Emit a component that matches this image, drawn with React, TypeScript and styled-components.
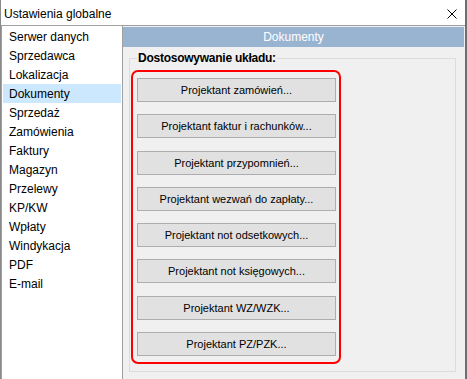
import React from "react";
import styled, { createGlobalStyle } from "styled-components";

const GlobalStyle = createGlobalStyle`
  html, body {
    margin: 0;
    padding: 0;
    background: #ffffff;
  }
  body {
    font-family: "Liberation Sans", Arial, sans-serif;
    color: #000000;
  }
  * { box-sizing: border-box; }
`;

const Window = styled.div`
  width: 467px;
  height: 379px;
  display: flex;
  flex-direction: column;
  border-left: 1px solid #8a8a8a;
  border-right: 2px solid #6f6f6f;
  background: #ffffff;
  overflow: hidden;
`;

const TitleBar = styled.div`
  height: 26px;
  flex: none;
  display: flex;
  align-items: flex-start;
  justify-content: space-between;
  padding: 7px 8px 0 3px;
  background: #ffffff;
  border-bottom: 1px solid #a0a0a0;
`;

const TitleText = styled.span`
  font-size: 12px;
  line-height: 14px;
`;

const CloseIcon = styled.svg`
  width: 10px;
  height: 10px;
  margin-top: 2px;
  display: block;
`;

const Body = styled.div`
  flex: 1;
  display: flex;
  min-height: 0;
`;

const NavList = styled.ul`
  list-style: none;
  margin: 0;
  width: 122px;
  flex: none;
  padding: 1px;
  background: #ffffff;
  border-left: 1px solid #a0a0a0;
  border-right: 1px solid #a0a0a0;
`;

const NavItem = styled.li<{ $active?: boolean }>`
  height: 19px;
  padding: 2px 0 0 6px;
  font-size: 12px;
  line-height: 17px;
  white-space: nowrap;
  background: ${(p) => (p.$active ? "#cce8ff" : "transparent")};
`;

const Pane = styled.div`
  flex: 1;
  display: flex;
  flex-direction: column;
  background: #f0f0f0;
  padding: 1px 1px 0 0;
`;

const PaneHeader = styled.div`
  height: 20px;
  flex: none;
  background: #99b4d1;
  color: #ffffff;
  font-size: 12px;
  line-height: 20px;
  text-align: center;
`;

const GroupBox = styled.div`
  position: relative;
  margin: 11px 8px 0 6px;
  height: 314px;
  border: 1px solid #dcdcdc;
  padding: 11px 0 0 1px;
`;

const GroupLabel = styled.span`
  position: absolute;
  left: 7px;
  top: -8px;
  padding: 0 1px;
  background: #f0f0f0;
  font-size: 12px;
  line-height: 14px;
  font-weight: bold;
  letter-spacing: -0.25px;
`;

const Highlight = styled.div`
  width: 210px;
  height: 294px;
  border: 2px solid #ff0000;
  border-radius: 7px;
  padding: 6px 3px 6px 4px;
  display: flex;
  flex-direction: column;
  gap: 12.3px;
`;

const DesignerButton = styled.button`
  height: 24px;
  width: 199px;
  flex: none;
  background: #e1e1e1;
  border: 1px solid #adadad;
  border-radius: 0;
  padding: 0;
  margin: 0;
  font-family: "Liberation Sans", Arial, sans-serif;
  font-size: 11px;
  line-height: 22px;
  color: #000000;
  text-align: center;
  cursor: default;
`;

const navItems = [
  "Serwer danych",
  "Sprzedawca",
  "Lokalizacja",
  "Dokumenty",
  "Sprzedaż",
  "Zamówienia",
  "Faktury",
  "Magazyn",
  "Przelewy",
  "KP/KW",
  "Wpłaty",
  "Windykacja",
  "PDF",
  "E-mail",
];

const buttons = [
  "Projektant zamówień...",
  "Projektant faktur i rachunków...",
  "Projektant przypomnień...",
  "Projektant wezwań do zapłaty...",
  "Projektant not odsetkowych...",
  "Projektant not księgowych...",
  "Projektant WZ/WZK...",
  "Projektant PZ/PZK...",
];

export default function App() {
  return (
    <>
      <GlobalStyle />
      <Window>
        <TitleBar>
          <TitleText>Ustawienia globalne</TitleText>
          <CloseIcon viewBox="0 0 10 10">
            <path d="M0.5 0.5 L9.5 9.5 M9.5 0.5 L0.5 9.5" stroke="#000" strokeWidth="1" fill="none" />
          </CloseIcon>
        </TitleBar>
        <Body>
          <NavList>
            {navItems.map((n) => (
              <NavItem key={n} $active={n === "Dokumenty"}>
                {n}
              </NavItem>
            ))}
          </NavList>
          <Pane>
            <PaneHeader>Dokumenty</PaneHeader>
            <GroupBox>
              <GroupLabel>Dostosowywanie układu:</GroupLabel>
              <Highlight>
                {buttons.map((b) => (
                  <DesignerButton key={b}>{b}</DesignerButton>
                ))}
              </Highlight>
            </GroupBox>
          </Pane>
        </Body>
      </Window>
    </>
  );
}
